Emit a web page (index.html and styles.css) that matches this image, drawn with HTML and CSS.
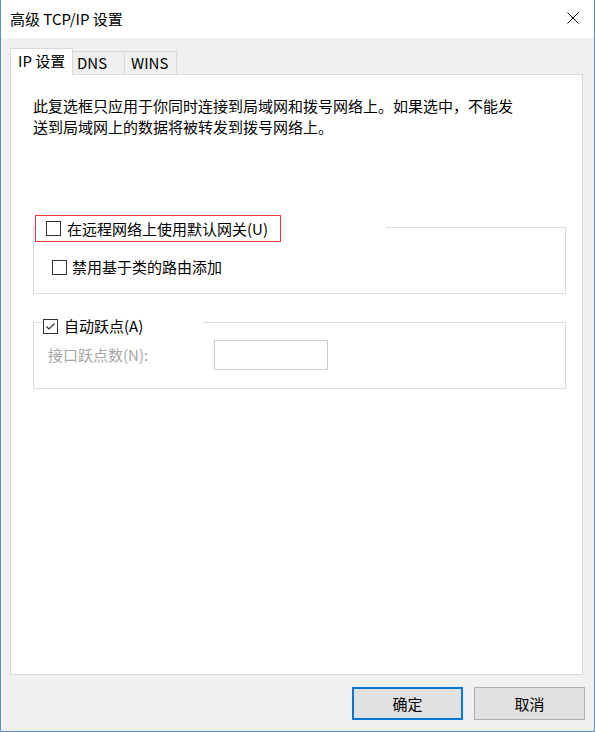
FILE: index.html
```html
<!DOCTYPE html>
<html lang="zh-CN">
<head>
<meta charset="utf-8">
<title>高级 TCP/IP 设置</title>
<link rel="stylesheet" href="styles.css">
</head>
<body>
<div class="window">
  <div class="titlebar">
    <span class="title">高级 TCP/IP 设置</span>
    <svg class="close" width="12" height="12" viewBox="0 0 12 12"><path d="M0.5 0.5 L11.5 11.5 M11.5 0.5 L0.5 11.5" stroke="#000" stroke-width="1" fill="none"/></svg>
  </div>
  <div class="client">
    <div class="tabs">
      <div class="tab active">IP 设置</div>
      <div class="tab tab-dns">DNS</div>
      <div class="tab tab-wins">WINS</div>
    </div>
    <div class="panel">
      <p class="desc">此复选框只应用于你同时连接到局域网和拨号网络上。如果选中，不能发<br>送到局域网上的数据将被转发到拨号网络上。</p>
      <fieldset class="group group-gw">
        <legend class="legend legend-gw">
          <div class="highlight"><span class="cb"></span><span>在远程网络上使用默认网关(U)</span></div>
        </legend>
        <div class="row row-class"><span class="cb"></span><span>禁用基于类的路由添加</span></div>
      </fieldset>
      <fieldset class="group group-metric">
        <legend class="legend legend-metric">
          <div class="legend-inner"><span class="cb"><svg width="13" height="13" viewBox="0 0 13 13"><path d="M2.5 6.5 L5 9 L10.5 3.5" stroke="#333" stroke-width="1.2" fill="none"/></svg></span><span>自动跃点(A)</span></div>
        </legend>
        <div class="row row-metric"><span class="metric-label">接口跃点数(N):</span><span class="input"></span></div>
      </fieldset>
    </div>
    <div class="buttons">
      <button class="btn btn-default">确定</button>
      <button class="btn">取消</button>
    </div>
  </div>
</div>
</body>
</html>
```
FILE: styles.css
```css
* { box-sizing: border-box; }
html, body { margin: 0; padding: 0; background: #ffffff; }
body {
  font-family: "Noto Sans CJK SC", "Liberation Sans", sans-serif;
  font-size: 15px;
  color: #000;
}
.window {
  width: 595px;
  height: 732px;
  border-left: 1px solid #5a8fc8;
  border-right: 1px solid #5a8fc8;
  border-bottom: 1px solid #5a8fc8;
  display: flex;
  flex-direction: column;
  background: #f0f0f0;
}
.titlebar {
  height: 38px;
  background: #fff;
  display: flex;
  align-items: center;
  justify-content: space-between;
  padding: 0 15px 0 9px;
  line-height: 38px;
}
.close { display: block; margin-bottom: 2px; }
.client {
  flex: 1;
  padding: 10px 9px 0 9px;
}
.tabs {
  display: flex;
  align-items: flex-end;
  height: 26px;
}
.tab {
  height: 23px;
  width: 52px;
  border-top: 1px solid #d9d9d9;
  border-right: 1px solid #d9d9d9;
  display: flex;
  align-items: center;
  line-height: 20px;
  white-space: nowrap;
}
.tab.active {
  position: relative;
  z-index: 1;
  width: 63px;
  height: 27px;
  margin-bottom: -1px;
  border: 1px solid #d9d9d9;
  border-bottom: 0;
  background: #fff;
  padding: 0 0 2px 7px;
}
.tab-dns { padding-left: 4px; }
.tab-wins { padding-left: 6px; }
.panel {
  width: 573px;
  height: 601px;
  background: #fff;
  border: 1px solid #d9d9d9;
  padding: 20px 16px 0 22px;
}
.desc {
  margin: 0;
  line-height: 21px;
}
.group {
  margin: 0;
  padding: 0;
  min-width: 0;
  border: 1px solid #dcdcdc;
}
.group-gw { margin-top: 75px; padding-bottom: 15px; }
.group-metric { margin-top: 14px; padding-bottom: 18px; }
.legend { padding: 0; }
.legend-gw { margin-left: 1px; width: 351px; padding-top: 3px; }
.highlight {
  width: 246px;
  height: 27px;
  border: 1px solid #e8383a;
  display: flex;
  align-items: center;
  gap: 6px;
  padding-left: 10px;
  line-height: 20px;
}
.legend-metric { margin-left: 8px; width: 161px; padding-top: 8px; }
.legend-inner {
  height: 20px;
  display: flex;
  align-items: center;
  gap: 6px;
  padding-left: 1px;
  line-height: 20px;
}
.cb {
  width: 15px;
  height: 15px;
  border: 1px solid #333;
  background: #fff;
  flex: none;
  display: block;
}
.cb svg { display: block; }
.row {
  display: flex;
  align-items: center;
  line-height: 20px;
}
.row-class {
  height: 22px;
  margin-top: 14px;
  margin-left: 18px;
  gap: 5px;
}
.row-metric {
  height: 30px;
  margin-top: 4px;
  margin-left: 14px;
}
.metric-label {
  width: 166px;
  color: #a6a6a6;
}
.input {
  width: 114px;
  height: 30px;
  border: 1px solid #cccccc;
  background: #fff;
}
.buttons {
  display: flex;
  justify-content: flex-end;
  gap: 11px;
  margin-top: 12px;
}
.btn {
  width: 111px;
  height: 33px;
  padding: 0;
  margin: 0;
  font-family: inherit;
  font-size: 15px;
  color: #000;
  background: #e1e1e1;
  border: 1px solid #adadad;
}
.btn-default { border: 2px solid #0078d7; }
```
